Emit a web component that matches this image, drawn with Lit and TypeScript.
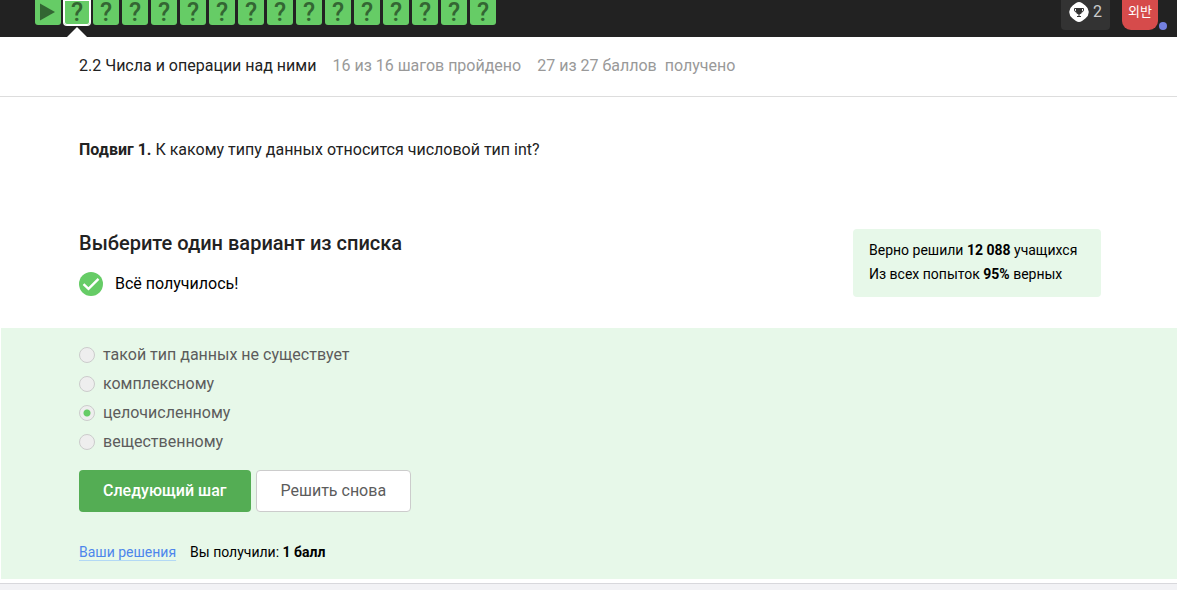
import { LitElement, html, css } from "lit";
import { customElement, state } from "lit/decorators.js";
import { classMap } from "lit/directives/class-map.js";

const OPTIONS = [
  "такой тип данных не существует",
  "комплексному",
  "целочисленному",
  "вещественному",
];

@customElement("step-bar")
export class StepBar extends LitElement {
  static styles = css`
    :host {
      display: block;
      background: #222;
    }
    .bar {
      display: flex;
      justify-content: space-between;
      height: 37px;
      padding: 0 19px 0 35px;
    }
    .steps {
      display: flex;
      gap: 3px;
    }
    .step {
      position: relative;
      box-sizing: border-box;
      display: flex;
      align-items: center;
      justify-content: center;
      width: 26px;
      height: 25px;
      border-radius: 0 0 3px 3px;
      background: #66cc66;
      color: #336633;
      font-size: 25px;
      font-weight: 500;
      line-height: 25px;
      text-decoration: none;
    }
    .current {
      box-shadow: 0 0 0 1px #fff, inset 0 0 0 1px #fff;
    }
    .current::after {
      content: "";
      position: absolute;
      top: 27px;
      left: 3px;
      border: 10px solid transparent;
      border-top: 0;
      border-bottom-color: #fff;
    }
    .account {
      display: flex;
      gap: 12px;
    }
    .streak {
      box-sizing: border-box;
      display: flex;
      align-items: center;
      gap: 4px;
      height: 30px;
      padding: 0 8px 6px;
      border: 0;
      border-radius: 0 0 4px 4px;
      background: #333;
      color: #ccc;
      font: 16px/24px Roboto, sans-serif;
    }
    .avatar {
      position: relative;
      box-sizing: border-box;
      width: 36px;
      height: 30px;
      padding: 0 0 8px;
      border: 0;
      border-radius: 0 0 9px 9px;
      background: #d64b4b;
      color: #fff;
      font: 13px/22px "Noto Sans CJK KR", sans-serif;
      white-space: nowrap;
    }
    .dot {
      position: absolute;
      right: -9px;
      bottom: 0;
      width: 8px;
      height: 8px;
      border-radius: 50%;
      background: #7480e0;
    }
  `;

  render() {
    return html`
      <header class="bar">
        <nav class="steps">
          <a class="step" href="#step-1" aria-label="Видео">
            <svg width="26" height="25" viewBox="0 0 26 25">
              <path d="M5 3.5 20 12 5 20.5z" fill="#336633" />
            </svg>
          </a>
          ${Array.from(
            { length: 15 },
            (_, i) => html`<a
              class=${classMap({ step: true, current: i === 0 })}
              href="#step-${i + 2}"
              >?</a
            >`
          )}
        </nav>
        <div class="account">
          <button class="streak">
            <svg width="20" height="20" viewBox="0 0 20 20">
              <path
                d="M7 .9Q10-.9 13 .9L16.300 3.500Q20 6.500 19.700 10Q20 13.500 16.300 16.500L13 19.100Q10 20.900 7 19.100L3.700 16.500Q0 13.500.3 10Q0 6.500 3.700 3.500Z"
                fill="#fff"
              />
              <path
                d="M7 6h6v3.500q0 2.400-2.500 3v1.500h1.500v1h-4v-1h1.500v-1.500Q7 11.900 7 9.500z"
                fill="#333"
              />
              <path
                d="M7 6.500h-1.500v1.500q0 1.800 2 2.200M13 6.500h1.500v1.500q0 1.800-2 2.200"
                fill="none"
                stroke="#333"
              />
            </svg>
            2
          </button>
          <button class="avatar">외반<span class="dot"></span></button>
        </div>
      </header>
    `;
  }
}

@customElement("app-root")
export class AppRoot extends LitElement {
  @state() private selected = 2;

  static styles = css`
    :host {
      display: block;
      min-height: 100vh;
      background: #f2f2f5;
      color: #222;
      font: 16px/24px Roboto, sans-serif;
    }
    .page {
      padding-bottom: 4px;
      border-bottom: 1px solid #d8d8dc;
      background: #fff;
    }
    .lesson {
      display: flex;
      flex-wrap: wrap;
      gap: 16px;
      padding: 17px 79px 18px;
      border-bottom: 1px solid #ddd;
    }
    .title {
      margin: 0;
      font-size: 16px;
      font-weight: 400;
    }
    .progress {
      color: #999;
      white-space: pre;
    }
    .question {
      margin: 0;
      padding: 41px 79px 67px;
    }
    .summary {
      display: flex;
      justify-content: space-between;
      align-items: flex-start;
      padding: 0 76px 31px 79px;
    }
    .heading {
      margin: 0 0 15px;
      font-size: 20px;
      font-weight: 500;
      line-height: 28px;
    }
    .result {
      display: flex;
      align-items: center;
      gap: 12px;
      color: #000;
    }
    .stats {
      box-sizing: border-box;
      min-width: 248px;
      padding: 9px 16px 11px;
      border-radius: 4px;
      background: #e7f8e9;
      color: #000;
      font-size: 14px;
    }
    .stats p {
      margin: 0;
    }
    .answer {
      margin-left: 1px;
      padding: 13px 78px 15px;
      background: #e7f8e9;
    }
    .options {
      display: grid;
      gap: 1px;
      margin: 0 0 14px;
      padding: 0;
      border: 0;
      color: #5c5c5c;
      line-height: 28px;
    }
    .option {
      display: flex;
      align-items: center;
      gap: 8px;
    }
    .radio {
      appearance: none;
      box-sizing: border-box;
      width: 16px;
      height: 16px;
      margin: 0;
      border: 1px solid #ccc;
      border-radius: 50%;
      background: #eee;
    }
    .radio:checked {
      background: radial-gradient(circle, #66cc66 3px, #eee 4px);
    }
    .actions {
      display: flex;
      gap: 5px;
      margin-bottom: 28px;
    }
    .button {
      padding: 8px 24px;
      border: 1px solid #ccc;
      border-radius: 4px;
      background: #fff;
      color: #5c5c5c;
      font: 16px/24px Roboto, sans-serif;
    }
    .primary {
      padding: 9px 24px;
      border: 0;
      background: #54ad54;
      color: #fff;
      font-weight: 500;
    }
    .footer {
      display: flex;
      gap: 14px;
      color: #000;
      font-size: 14px;
    }
    .link {
      color: #4d86ec;
      text-decoration: underline #b3d9f5 1px;
      text-underline-offset: 3px;
    }
  `;

  render() {
    return html`
      <main class="page">
        <step-bar></step-bar>
        <div class="lesson">
          <h1 class="title">2.2 Числа и операции над ними</h1>
          <span class="progress">16 из 16 шагов пройдено</span>
          <span class="progress">27 из 27 баллов  получено</span>
        </div>
        <p class="question">
          <b>Подвиг 1.</b> К какому типу данных относится числовой тип int?
        </p>
        <section class="summary">
          <div>
            <h2 class="heading">Выберите один вариант из списка</h2>
            <div class="result">
              <svg width="24" height="24" viewBox="0 0 24 24">
                <circle cx="12" cy="12" r="12" fill="#66cc66" />
                <path
                  d="m4.500 12.200 5 4.700L19.500 6.900"
                  fill="none"
                  stroke="#fff"
                  stroke-width="2.400"
                />
              </svg>
              Всё получилось!
            </div>
          </div>
          <div class="stats">
            <p>Верно решили <b>12 088</b> учащихся</p>
            <p>Из всех попыток <b>95%</b> верных</p>
          </div>
        </section>
        <form class="answer" @submit=${(e: Event) => e.preventDefault()}>
          <fieldset class="options" aria-label="Варианты ответа">
            ${OPTIONS.map(
              (text, i) => html`<label class="option">
                <input
                  class="radio"
                  type="radio"
                  name="answer"
                  .checked=${this.selected === i}
                  @change=${() => (this.selected = i)}
                />
                ${text}
              </label>`
            )}
          </fieldset>
          <div class="actions">
            <button class="button primary" type="submit">Следующий шаг</button>
            <button class="button" type="button">Решить снова</button>
          </div>
          <div class="footer">
            <a class="link" href="#solutions">Ваши решения</a>
            <span>Вы получили: <b>1 балл</b></span>
          </div>
        </form>
      </main>
    `;
  }
}
